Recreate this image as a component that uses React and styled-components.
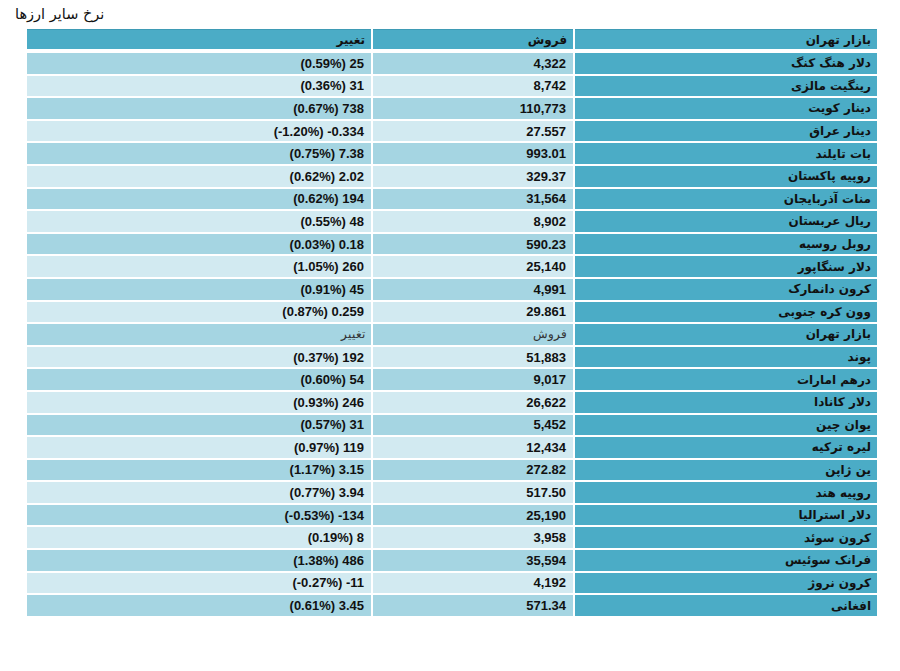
import React from "react";
import styled, { createGlobalStyle } from "styled-components";

const GlobalStyle = createGlobalStyle`
  html, body {
    margin: 0;
    padding: 0;
    background: #ffffff;
  }
  body {
    font-family: "Liberation Sans", "DejaVu Sans", sans-serif;
    color: #111;
  }
`;

const Page = styled.div`
  width: 900px;
  height: 671px;
  padding: 5px 0 0 0;
  box-sizing: border-box;
`;

const Title = styled.h2`
  margin: 0 0 5px 15px;
  width: 92px;
  height: 19px;
  direction: rtl;
  text-align: left;
  font-family: "DejaVu Sans", "Liberation Sans", sans-serif;
  font-size: 14.5px;
  font-weight: normal;
  line-height: 19px;
  color: #111;
  white-space: nowrap;
`;

const Table = styled.div`
  margin-left: 27px;
  width: 850px;
  display: flex;
  flex-direction: column;
  gap: 2px;
`;

const Row = styled.div`
  direction: rtl;
  display: grid;
  grid-template-columns: 302px 200px 344px;
  column-gap: 2px;
  height: ${(p) => (p.$head ? "20px" : "20.6px")};
  margin-bottom: ${(p) => (p.$head ? "2px" : "0")};
`;

const tones = {
  dark: "#4bacc6",
  mid: "#a5d5e2",
  light: "#d2eaf1",
};

const Cell = styled.div`
  background: ${(p) => tones[p.$tone]};
  border-top: ${(p) => (p.$head ? "1px solid #3e9bb5" : "none")};
  box-sizing: border-box;
  display: flex;
  align-items: center;
  justify-content: flex-start;
  padding: 0 6px;
  font-size: ${(p) => (p.$plain ? "12px" : "13px")};
  font-weight: ${(p) => (p.$plain ? "normal" : "bold")};
  font-family: ${(p) =>
    p.$plain
      ? '"DejaVu Serif", "Liberation Serif", serif'
      : '"Liberation Sans", "DejaVu Sans", sans-serif'};
  color: ${(p) => (p.$plain ? "#333" : "#111")};
  white-space: nowrap;
  overflow: hidden;
`;

const Num = styled.span`
  direction: ltr;
  unicode-bidi: isolate;
  padding-right: 1px;
`;

const Name = styled.span`
  font-family: "DejaVu Sans", sans-serif;
  font-size: 12px;
`;

const rows = [
  ["دلار هنگ کنگ", "4,322", "(0.59%) 25"],
  ["رینگیت مالزی", "8,742", "(0.36%) 31"],
  ["دینار کویت", "110,773", "(0.67%) 738"],
  ["دینار عراق", "27.557", "(-1.20%) -0.334"],
  ["بات تایلند", "993.01", "(0.75%) 7.38"],
  ["روپیه پاکستان", "329.37", "(0.62%) 2.02"],
  ["منات آذربایجان", "31,564", "(0.62%) 194"],
  ["ریال عربستان", "8,902", "(0.55%) 48"],
  ["روبل روسیه", "590.23", "(0.03%) 0.18"],
  ["دلار سنگاپور", "25,140", "(1.05%) 260"],
  ["کرون دانمارک", "4,991", "(0.91%) 45"],
  ["وون کره جنوبی", "29.861", "(0.87%) 0.259"],
  "sub",
  ["پوند", "51,883", "(0.37%) 192"],
  ["درهم امارات", "9,017", "(0.60%) 54"],
  ["دلار کانادا", "26,622", "(0.93%) 246"],
  ["یوان چین", "5,452", "(0.57%) 31"],
  ["لیره ترکیه", "12,434", "(0.97%) 119"],
  ["ین ژاپن", "272.82", "(1.17%) 3.15"],
  ["روپیه هند", "517.50", "(0.77%) 3.94"],
  ["دلار استرالیا", "25,190", "(-0.53%) -134"],
  ["کرون سوئد", "3,958", "(0.19%) 8"],
  ["فرانک سوئیس", "35,594", "(1.38%) 486"],
  ["کرون نروژ", "4,192", "(-0.27%) -11"],
  ["افغانی", "571.34", "(0.61%) 3.45"],
];

export default function App() {
  return (
    <Page>
      <GlobalStyle />
      <Title>نرخ سایر ارزها</Title>
      <Table>
        <Row $head>
          <Cell $tone="dark" $head>
            <Name>بازار تهران</Name>
          </Cell>
          <Cell $tone="dark" $head>
            <Name>فروش</Name>
          </Cell>
          <Cell $tone="dark" $head>
            <Name>تغییر</Name>
          </Cell>
        </Row>
        {rows.map((r, i) => {
          const tone = i % 2 === 0 ? "mid" : "light";
          if (r === "sub") {
            return (
              <Row key={i}>
                <Cell $tone="dark">
                  <Name>بازار تهران</Name>
                </Cell>
                <Cell $tone={tone} $plain>
                  فروش
                </Cell>
                <Cell $tone={tone} $plain>
                  تغییر
                </Cell>
              </Row>
            );
          }
          return (
            <Row key={i}>
              <Cell $tone="dark">
                <Name>{r[0]}</Name>
              </Cell>
              <Cell $tone={tone}>
                <Num>{r[1]}</Num>
              </Cell>
              <Cell $tone={tone}>
                <Num>{r[2]}</Num>
              </Cell>
            </Row>
          );
        })}
      </Table>
    </Page>
  );
}
